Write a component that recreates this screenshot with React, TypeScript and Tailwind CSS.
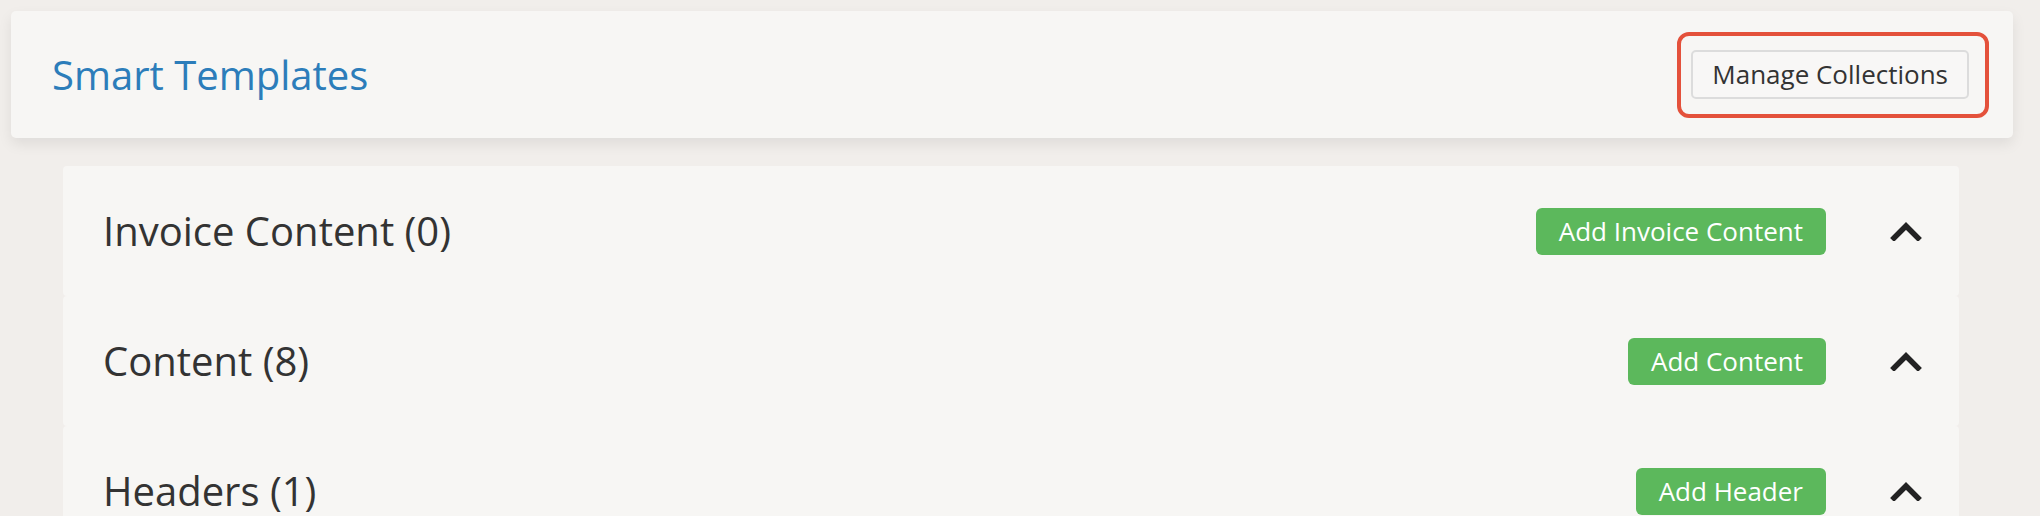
import React from 'react';

interface Section {
  title: string;
  action: string;
}

const sections: Section[] = [
  { title: 'Invoice Content (0)', action: 'Add Invoice Content' },
  { title: 'Content (8)', action: 'Add Content' },
  { title: 'Headers (1)', action: 'Add Header' },
];

function ChevronUp() {
  return (
    <svg width="32" height="20" viewBox="0 0 32 20" fill="none" className="block">
      <path d="M4 17 L16 5 L28 17" stroke="#222222" strokeWidth="5.5" strokeLinecap="square" strokeLinejoin="miter" />
    </svg>
  );
}

function SectionRow({ section }: { section: Section }) {
  return (
    <div className="flex h-[130px] items-center rounded-[4px] bg-[#f7f6f4] pl-[40px] pr-[37px]">
      <h2 className="flex-1 text-[40px] leading-none text-[#333333]">{section.title}</h2>
      <button className="h-[47px] rounded-[6px] bg-[#5cb85c] px-[23px] text-[26px] leading-none text-white">
        {section.action}
      </button>
      <div className="ml-[64px]">
        <ChevronUp />
      </div>
    </div>
  );
}

export default function App() {
  return (
    <div
      className="min-h-screen bg-[#f1eeeb] pt-[11px]"
      style={{ fontFamily: '"Open Sans", "Liberation Sans", sans-serif' }}
    >
      {/* Page header */}
      <div className="ml-[11px] mr-[27px] flex h-[127px] items-center rounded-[5px] bg-[#f7f6f4] pl-[41px] pr-[24px] shadow-[0_6px_14px_rgba(0,0,0,0.08)]">
        <h1 className="flex-1 text-[40px] leading-none text-[#2c7dba]">Smart Templates</h1>
        <div className="rounded-[12px] border-[4px] border-[#e4513b] pb-[15px] pl-[10px] pr-[16px] pt-[14px]">
          <button className="block h-[49px] rounded-[5px] border-2 border-[#dcdcdc] bg-[#f8f7f6] px-[19px] text-[26px] leading-none text-[#333333]">
            Manage Collections
          </button>
        </div>
      </div>

      {/* Collapsible sections */}
      <div className="ml-[63px] mr-[81px] mt-[28px] flex flex-col">
        {sections.map(s => (
          <SectionRow key={s.title} section={s} />
        ))}
      </div>
    </div>
  );
}
